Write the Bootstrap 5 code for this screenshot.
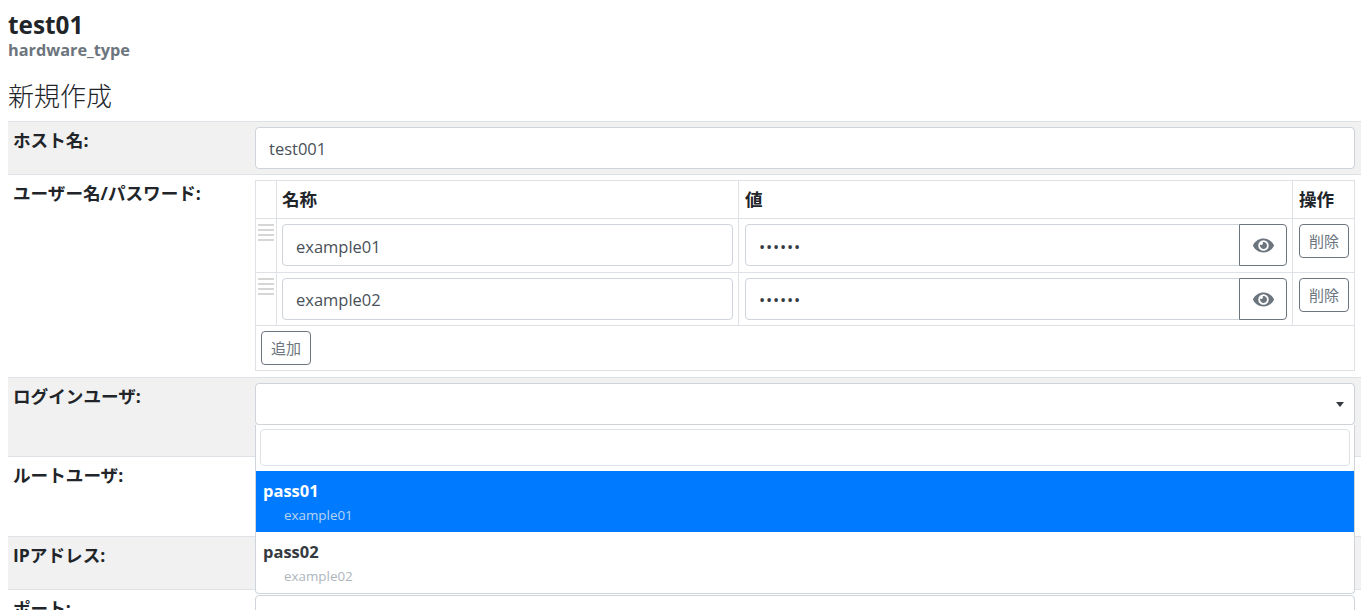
<!DOCTYPE html>
<html lang="ja">
<head>
    <meta charset="UTF-8">
    <meta name="viewport" content="width=device-width, initial-scale=1.0">
    <title>新規作成</title>
    <link href="https://cdn.jsdelivr.net/npm/bootstrap@5.3.0/dist/css/bootstrap.min.css" rel="stylesheet">
    <style>
        html, body {
            overflow: hidden;
        }
        body {
            padding: 12px 11px 0 8px;
            font-family: "Open Sans", "Noto Sans CJK JP", sans-serif;
            color: #212529;
        }
        .page-title {
            font-size: 24.3px;
            font-weight: 700;
            line-height: 26px;
            margin: 0;
        }
        .page-sub {
            font-size: 16.3px;
            font-weight: 700;
            line-height: 24px;
            color: #6c757d;
            margin: 0;
        }
        .page-heading {
            font-size: 26px;
            font-weight: 300;
            line-height: 36px;
            margin: 16px 0 7px;
        }
        .form-line {
            display: flex;
            border-top: 1px solid #dee2e6;
            padding: 5px 6px 5px 0;
        }
        .form-line.tinted {
            background: #f1f1f1;
        }
        .form-line.pair-line {
            padding-bottom: 5px;
            height: 203px;
        }
        .line-label {
            width: 247px;
            flex: none;
            padding: 1px 5px;
            font-size: 17.6px;
            font-weight: 700;
            line-height: 24px;
        }
        .line-body {
            flex: 1;
            min-width: 0;
            position: relative;
        }
        .form-control.plain-input {
            height: 42px;
            padding: 6px 13px;
            font-size: 16.5px;
            color: #495057;
            border-color: #ced4da;
            border-radius: 4px;
        }
        .first-pair .form-control.plain-input {
            padding: 7px 13px 5px;
        }
        .form-control.plain-input.dots {
            letter-spacing: .8px;
            color: #343a40;
        }
        .pair-table {
            table-layout: fixed;
            margin: 0;
            border-color: #dee2e6;
        }
        .pair-table > * > tr > * {
            padding: 5px;
            vertical-align: top;
            color: #212529;
        }
        .pair-table > * > tr > .wide-pad {
            padding-left: 6px;
        }
        .pair-table > tbody > tr.first-pair > * {
            padding-bottom: 6px;
        }
        .pair-table > thead > tr > th {
            font-size: 17.6px;
            line-height: 27px;
            padding: 5px 5px 5px;
        }
        .pair-table > thead > tr > th.wide-pad {
            padding-left: 6px;
        }
        .grip {
            display: block;
            width: 16px;
            height: 17px;
            margin: 0 0 0 -3px;
            background: repeating-linear-gradient(#d6d6d6 0 2px, transparent 2px 5px);
        }
        .input-group > .form-control.plain-input {
            border-radius: 4px 0 0 4px;
        }
        .input-group > .eye-btn {
            width: 48px;
            height: 42px;
            padding: 0;
            background: #fff;
            border-radius: 0 4px 4px 0;
        }
        .eye-btn svg {
            display: block;
            width: 21px;
            height: 19px;
            margin: 0 auto;
            fill: #6c757d;
        }
        .small-btn {
            width: 50px;
            height: 34px;
            padding: 0;
            font-size: 15px;
            line-height: 30px;
            border-radius: 4px;
        }
        .picker-caret {
            position: absolute;
            right: 11px;
            top: 19px;
            border-left: 4px solid transparent;
            border-right: 4px solid transparent;
            border-top: 5px solid #343a40;
        }
        .picker-menu {
            position: absolute;
            left: 0;
            right: 0;
            top: 42px;
            z-index: 5;
            background: #fff;
            border: 1px solid #ced4da;
            border-top: 0;
            border-radius: 0 0 4px 4px;
        }
        .picker-search {
            padding: 4px 4px 5px;
        }
        .picker-search .form-control {
            height: 37px;
            border-radius: 4px;
        }
        .picker-item {
            height: 61px;
            padding: 8px 6px 0 7px;
            color: #343a40;
        }
        .picker-item strong {
            display: block;
            font-size: 16.5px;
            line-height: 24px;
        }
        .picker-item span {
            display: block;
            font-size: 13.4px;
            line-height: 20px;
            padding: 2px 0 0 21px;
            color: #adb5bd;
        }
        .picker-item.chosen {
            background: #007bff;
            color: #fff;
        }
        .picker-item.chosen span {
            color: #b8d4f3;
        }
        .tall-79 {
            height: 79px;
        }
        .tall-80 {
            height: 80px;
        }
    </style>
</head>
<body>
    <h1 class="page-title">test01</h1>
    <p class="page-sub">hardware_type</p>
    <h2 class="page-heading">新規作成</h2>

    <div class="form-line tinted">
        <div class="line-label">ホスト名:</div>
        <div class="line-body">
            <input class="form-control plain-input" type="text" value="test001">
        </div>
    </div>

    <div class="form-line pair-line">
        <div class="line-label">ユーザー名/パスワード:</div>
        <div class="line-body">
            <table class="table table-bordered pair-table">
                <colgroup>
                    <col style="width: 21px">
                    <col style="width: 462px">
                    <col style="width: 554px">
                    <col style="width: 62px">
                </colgroup>
                <thead>
                    <tr>
                        <th></th>
                        <th>名称</th>
                        <th class="wide-pad">値</th>
                        <th class="wide-pad">操作</th>
                    </tr>
                </thead>
                <tbody>
                    <tr class="first-pair">
                        <td><span class="grip"></span></td>
                        <td><input class="form-control plain-input" type="text" value="example01"></td>
                        <td class="wide-pad">
                            <div class="input-group">
                                <input class="form-control plain-input dots" type="password" value="secret">
                                <button class="btn btn-outline-secondary eye-btn" type="button" aria-label="表示">
                                    <svg viewBox="0 0 576 512"><path d="M572.52 241.4C518.29 135.59 407.81 64 288 64S57.68 135.64 3.48 241.41a32.35 32.35 0 0 0 0 29.19C57.71 376.41 168.19 448 288 448s230.32-71.64 284.52-177.41a32.35 32.35 0 0 0 0-29.19zM288 400a144 144 0 1 1 144-144 143.93 143.93 0 0 1-144 144zm0-240a95.31 95.31 0 0 0-25.31 3.79 47.85 47.85 0 0 1-66.9 66.9A95.78 95.78 0 1 0 288 160z"/></svg>
                                </button>
                            </div>
                        </td>
                        <td class="wide-pad"><button class="btn btn-outline-secondary small-btn" type="button">削除</button></td>
                    </tr>
                    <tr>
                        <td><span class="grip"></span></td>
                        <td><input class="form-control plain-input" type="text" value="example02"></td>
                        <td class="wide-pad">
                            <div class="input-group">
                                <input class="form-control plain-input dots" type="password" value="secret">
                                <button class="btn btn-outline-secondary eye-btn" type="button" aria-label="表示">
                                    <svg viewBox="0 0 576 512"><path d="M572.52 241.4C518.29 135.59 407.81 64 288 64S57.68 135.64 3.48 241.41a32.35 32.35 0 0 0 0 29.19C57.71 376.41 168.19 448 288 448s230.32-71.64 284.52-177.41a32.35 32.35 0 0 0 0-29.19zM288 400a144 144 0 1 1 144-144 143.93 143.93 0 0 1-144 144zm0-240a95.31 95.31 0 0 0-25.31 3.79 47.85 47.85 0 0 1-66.9 66.9A95.78 95.78 0 1 0 288 160z"/></svg>
                                </button>
                            </div>
                        </td>
                        <td class="wide-pad"><button class="btn btn-outline-secondary small-btn" type="button">削除</button></td>
                    </tr>
                    <tr>
                        <td colspan="4"><button class="btn btn-outline-secondary small-btn" type="button">追加</button></td>
                    </tr>
                </tbody>
            </table>
        </div>
    </div>

    <div class="form-line tinted tall-79">
        <div class="line-label">ログインユーザ:</div>
        <div class="line-body">
            <input class="form-control plain-input" type="text" readonly>
            <span class="picker-caret"></span>
            <div class="picker-menu">
                <div class="picker-search">
                    <input class="form-control" type="text">
                </div>
                <div class="picker-item chosen">
                    <strong>pass01</strong>
                    <span>example01</span>
                </div>
                <div class="picker-item">
                    <strong>pass02</strong>
                    <span>example02</span>
                </div>
            </div>
        </div>
    </div>

    <div class="form-line tall-80">
        <div class="line-label">ルートユーザ:</div>
        <div class="line-body"></div>
    </div>

    <div class="form-line tinted">
        <div class="line-label">IPアドレス:</div>
        <div class="line-body">
            <input class="form-control plain-input" type="text">
        </div>
    </div>

    <div class="form-line">
        <div class="line-label">ポート:</div>
        <div class="line-body">
            <input class="form-control plain-input" type="text">
        </div>
    </div>
    <script src="https://cdn.jsdelivr.net/npm/bootstrap@5.3.0/dist/js/bootstrap.bundle.min.js"></script>
</body>
</html>
